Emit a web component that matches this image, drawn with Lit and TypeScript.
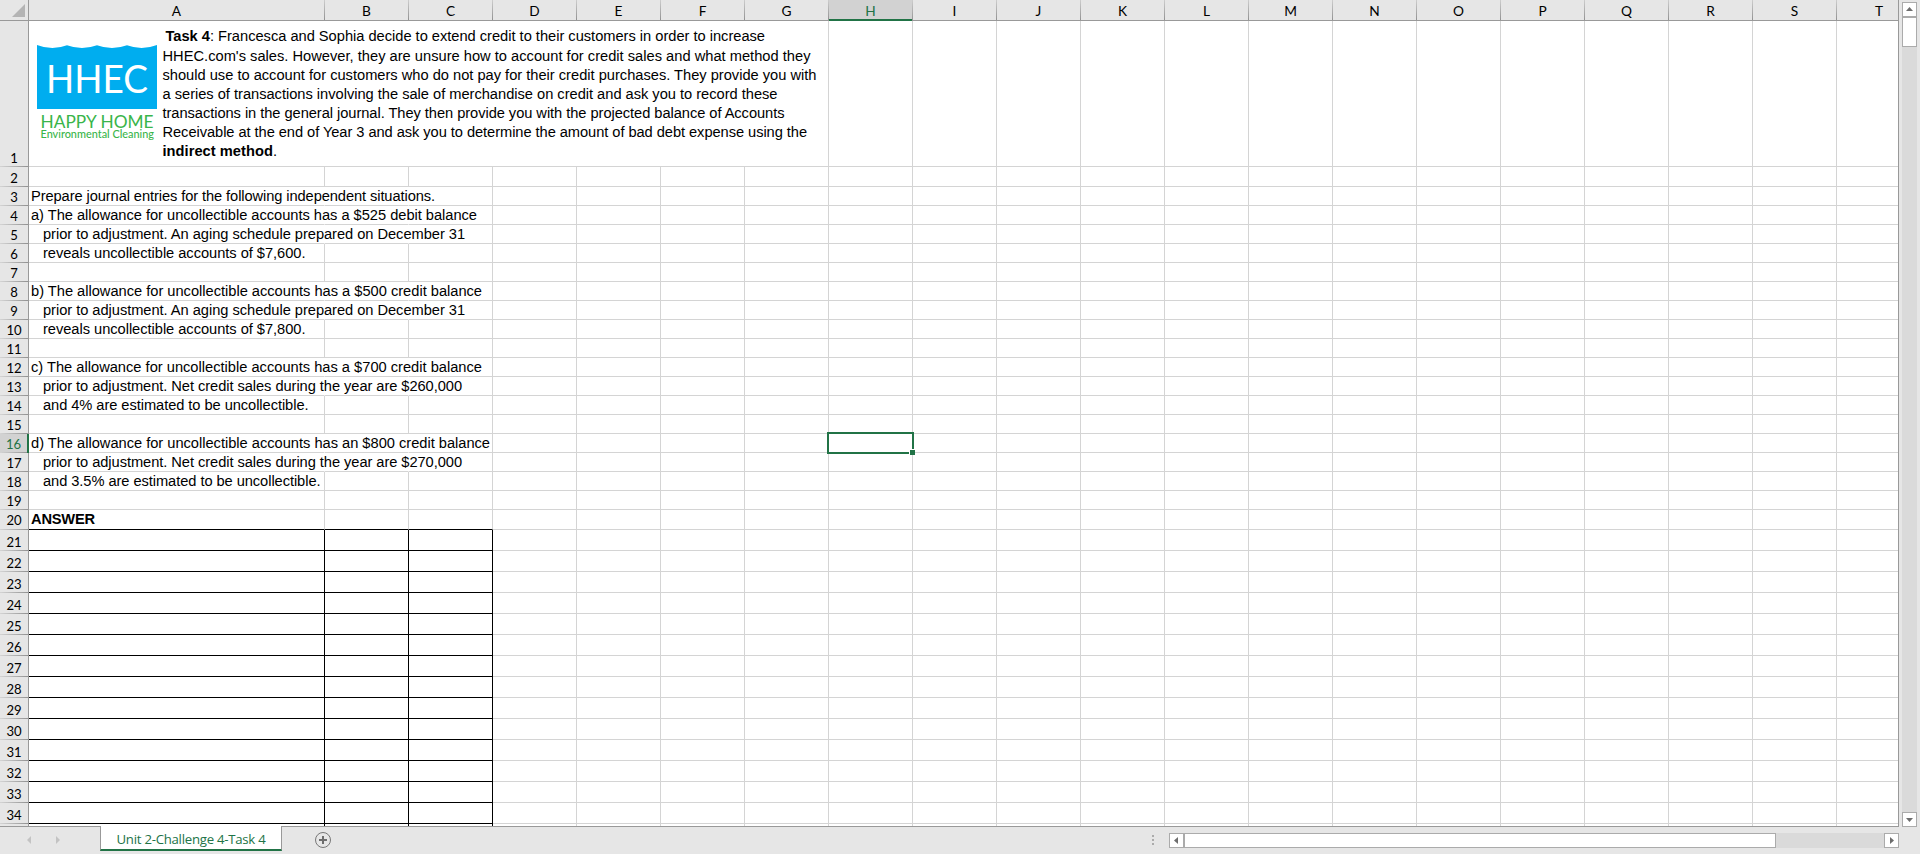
import { LitElement, html, css, svg, nothing } from "lit";
import { customElement } from "lit/decorators.js";
import { classMap } from "lit/directives/class-map.js";

interface Line { text: string; width: number; indent?: boolean; bold?: boolean; spill?: boolean; }

const COLUMNS = "ABCDEFGHIJKLMNOPQRST".split("");
const AGING = (width: number): Line => ({ text: "prior to adjustment. An aging schedule prepared on December 31", width, indent: true, spill: true });

const CONTENT: Record<number, Line> = {
  3: { text: "Prepare journal entries for the following independent situations.", width: 404, spill: true },
  4: { text: "a) The allowance for uncollectible accounts has a $525 debit balance", width: 446, spill: true },
  5: AGING(422),
  6: { text: "reveals uncollectible accounts of $7,600.", width: 262.5, indent: true },
  8: { text: "b) The allowance for uncollectible accounts has a $500 credit balance", width: 451, spill: true },
  9: AGING(422),
  10: { text: "reveals uncollectible accounts of $7,800.", width: 262.5, indent: true },
  12: { text: "c) The allowance for uncollectible accounts has a $700 credit balance", width: 451, spill: true },
  13: { text: "prior to adjustment. Net credit sales during the year are $260,000", width: 419, indent: true, spill: true },
  14: { text: "and 4% are estimated to be uncollectible.", width: 265.5, indent: true },
  16: { text: "d) The allowance for uncollectible accounts has an $800 credit balance", width: 459, spill: true },
  17: { text: "prior to adjustment. Net credit sales during the year are $270,000", width: 419, indent: true, spill: true },
  18: { text: "and 3.5% are estimated to be uncollectible.", width: 277.5, indent: true },
  20: { text: "ANSWER", width: 64, bold: true },
};

const TASK = [
  { head: "Task 4", text: ": Francesca and Sophia decide to extend credit to their customers in order to increase", width: 599.5 },
  { head: "", text: "HHEC.com's sales. However, they are unsure how to account for credit sales and what method they", width: 648 },
  { head: "", text: "should use to account for customers who do not pay for their credit purchases. They provide you with", width: 654 },
  { head: "", text: "a series of transactions involving the sale of merchandise on credit and ask you to record these", width: 615 },
  { head: "", text: "transactions in the general journal. They then provide you with the projected balance of Accounts", width: 622 },
  { head: "", text: "Receivable at the end of Year 3 and ask you to determine the amount of bad debt expense using the", width: 644.5 },
  { head: "indirect method", text: ".", width: 114.5 },
];

@customElement("app-root")
export class AppRoot extends LitElement {
  static styles = css`
    :host { display: block; width: 1920px; height: 854px; overflow: hidden; background: #e6e6e6;
      font-family: "Liberation Sans", Arial, sans-serif; font-size: 14.67px; color: #000; }
    * { box-sizing: border-box; }
    .app { display: flex; flex-direction: column; height: 854px; }
    .upper { display: flex; height: 827px; }
    .sheet { width: 1899px; height: 827px; overflow: hidden; display: flex; flex-direction: column;
      border-right: 1px solid #999; border-bottom: 1px solid #999; background: #fff; position: relative; }
    .row { display: flex; flex: none; height: 19px; }
    .row.first { height: 146px; }
    .row.h20 { height: 20px; }
    .row.h21 { height: 21px; }
    .names { display: flex; flex: none; height: 21px; width: 1899px; margin-right: -1px; background: #e6e6e6; border-bottom: 1px solid #999; }
    .name { flex: none; width: 84px; height: 20px; font: 13.7px/22px Lato, sans-serif; text-align: center;
      border-right: 1px solid; border-image: linear-gradient(#d0d0d0, #8f8f8f) 1; }
    .name.a { width: 296px; }
    .name.last { border: 0; }
    .name.on { background: #d2d2d2; color: #217346; height: 21px; box-shadow: inset 0 -2px #217346; }
    .corner { flex: none; width: 29px; height: 20px; border-right: 1px solid #999; display: flex; justify-content: flex-end; padding: 4px 3px 0 0; }
    .num { flex: none; width: 29px; background: #e6e6e6; border-right: 1px solid #999; display: flex;
      align-items: flex-end; justify-content: center; font: 13.1px/17px Lato, sans-serif; position: relative; }
    .num::after { content: ""; position: absolute; left: 0; right: 0; bottom: 0; height: 1px; background: linear-gradient(90deg, #d4d4d4, #929292); }
    .num.on { background: #d2d2d2; color: #217346; border-right: 2px solid #217346; }
    .cell { flex: none; width: 84px; border-right: 1px solid #d4d4d4; border-bottom: 1px solid #d4d4d4; position: relative; }
    .cell.a { width: 296px; padding-left: 2px; display: flex; align-items: flex-end; }
    .cell.merged { width: 800px; display: flex; }
    .cell.open { border-right-color: transparent; }
    .cell.black { border-right-color: #000; border-bottom-color: #000; }
    .cell.under { border-bottom-color: #000; }
    .cell.a.under { padding-bottom: 1px; }
    .num.raised { padding-bottom: 1px; }
    .line { white-space: pre; line-height: 17px; display: inline-block; position: relative; z-index: 1; }
    .indent { margin-left: 12px; }
    .bold, b { font-weight: 700; }
    .logo { flex: none; margin: 22px 0 0 8px; overflow: visible; }
    .task { padding: 6px 0 0 3.5px; display: flex; flex-direction: column; align-items: flex-start; }
    .task .line { line-height: 19px; height: 19px; }
    .task .line:first-child { margin-left: 3px; height: 20px; }
    .sel { position: absolute; left: -2px; top: -2px; width: 87px; height: 22px; border: 2px solid #217346; z-index: 2; }
    .knob { position: absolute; right: -3px; bottom: -3px; width: 6px; height: 6px; background: #217346;
      border: solid #fff; border-width: 1px 0 0 1px; }
    .vbar { margin: 2px 0 0 3px; width: 15px; height: 825px; background: #dadada; display: flex; flex-direction: column; }
    .box { flex: none; width: 15px; height: 15px; background: #fff; border: 1px solid #ababab; display: flex; align-items: center; justify-content: center; }
    .vthumb { height: 30px; background: #fff; border: 1px solid #ababab; }
    .grow { flex: 1; }
    .footer { display: flex; height: 27px; }
    .nav { width: 100px; padding: 9px 0 0 26px; }
    .tab { width: 182px; height: 25px; margin-top: -1px; background: #fff; border: 1px solid #999; border-top: 0;
      border-bottom: 2px solid #217346; position: relative; color: #217346; text-align: center; font: 13.2px/26px "Open Sans", sans-serif; white-space: nowrap; }
    .plus { margin: 4px 0 0 32px; }
    .dots { width: 2px; margin: 8px 15px 0 0; display: flex; flex-direction: column; gap: 2px; }
    .dot { width: 2px; height: 2px; background: #ababab; }
    .hbar { width: 730px; height: 15px; margin: 6px 21px 0 0; background: #dadada; display: flex; }
    .hthumb { width: 592px; background: #fff; border: 1px solid #ababab; }
    svg { display: block; }
  `;

  /* Spread each run of text over its set width. */
  protected updated() {
    this.renderRoot.querySelectorAll<HTMLElement>("[data-width]").forEach((el) => {
      el.style.letterSpacing = "0";
      const natural = el.getBoundingClientRect().width;
      const count = (el.textContent ?? "").length;
      el.style.letterSpacing = `${(Number(el.dataset.width) - natural) / count}px`;
    });
  }

  private logo() {
    return html`<svg class="logo" width="122" height="100" viewBox="0 0 122 100">
      <path fill="#00adef" d="M0 2q15 6 30 0.300q15 5.500 30 0q15 5.500 30 0q15 5.500 30-0.300V66H0z"/>
      ${svg`<text x="9" y="49.800" font-family="Lato" font-size="39.500" fill="#fff" textLength="102" lengthAdjust="spacingAndGlyphs">HHEC</text>
      <text x="3.500" y="85" font-family="Lato" font-size="18" fill="#39b54a" textLength="113" lengthAdjust="spacingAndGlyphs">HAPPY HOME</text>
      <text x="3.500" y="94.700" font-family="Lato" font-size="11.500" font-weight="500" fill="#39b54a" textLength="113.500" lengthAdjust="spacingAndGlyphs">Environmental Cleaning</text>`}
    </svg>`;
  }

  private arrow(points: string, color = "#6d6d6d") {
    return html`<svg width="7" height="7" viewBox="0 0 7 7"><polygon points=${points} fill=${color}/></svg>`;
  }

  private row(n: number) {
    const line = CONTENT[n];
    const answer = n > 20;
    const size = { row: true, first: n === 1, h20: n === 2 || n === 20, h21: answer };
    return html`<div class=${classMap(size)}>
      <div class=${classMap({ num: true, on: n === 16, raised: n === 20 })}>${n < 35 ? n : nothing}</div>
      ${COLUMNS.map((c, i) => {
        if (n === 1 && i < 7) {
          return i ? nothing : html`<div class="cell merged">${this.logo()}<div class="task">
            ${TASK.map((t) => html`<span class="line" data-width=${t.width}>${t.head ? html`<b>${t.head}</b>` : nothing}${t.text}</span>`)}
          </div></div>`;
        }
        const kind = { cell: true, a: i === 0, open: !!line?.spill && i < 2, black: answer && i < 3, under: n === 20 && i < 3 };
        return html`<div class=${classMap(kind)}>${i === 0 && line
          ? html`<span class=${classMap({ line: true, indent: !!line.indent, bold: !!line.bold })} data-width=${line.width}>${line.text}</span>` : nothing}${c === "H" && n === 16
          ? html`<div class="sel"><div class="knob"></div></div>` : nothing}</div>`;
      })}
    </div>`;
  }

  render() {
    const rows = Array.from({ length: 35 }, (_, i) => i + 1);
    return html`<div class="app">
      <div class="upper">
        <div class="sheet">
          <div class="names">
            <div class="corner"><svg width="13" height="13" viewBox="0 0 13 13"><path d="M13 0v13H0z" fill="#b4b4b4"/></svg></div>
            ${COLUMNS.map((c) => html`<div class=${classMap({ name: true, a: c === "A", on: c === "H", last: c === "T" })}>${c}</div>`)}
          </div>
          ${rows.map((n) => this.row(n))}
        </div>
        <div class="vbar">
          <div class="box">${this.arrow("0,5 3.5,1 7,5")}</div>
          <div class="vthumb"></div><div class="grow"></div>
          <div class="box">${this.arrow("0,2 3.5,6 7,2")}</div>
        </div>
      </div>
      <div class="footer">
        <div class="nav"><svg width="36" height="8" viewBox="0 0 36 8"><path d="M5 0v8L1 4zM30 0v8l4-4z" fill="#c3c3c3"/></svg></div>
        <div class="tab"><span data-width="149">Unit 2-Challenge 4-Task 4</span></div>
        <svg class="plus" width="18" height="18" viewBox="0 0 18 18"><circle cx="9" cy="9" r="7.500" fill="none" stroke="#777"/><path d="M9 5v8M5 9h8" stroke="#6d6d6d" stroke-width="2"/></svg>
        <div class="grow"></div>
        <div class="dots"><div class="dot"></div><div class="dot"></div><div class="dot"></div></div>
        <div class="hbar">
          <div class="box">${this.arrow("5,0 1,3.5 5,7")}</div>
          <div class="hthumb"></div><div class="grow"></div>
          <div class="box">${this.arrow("2,0 6,3.5 2,7")}</div>
        </div>
      </div>
    </div>`;
  }
}
